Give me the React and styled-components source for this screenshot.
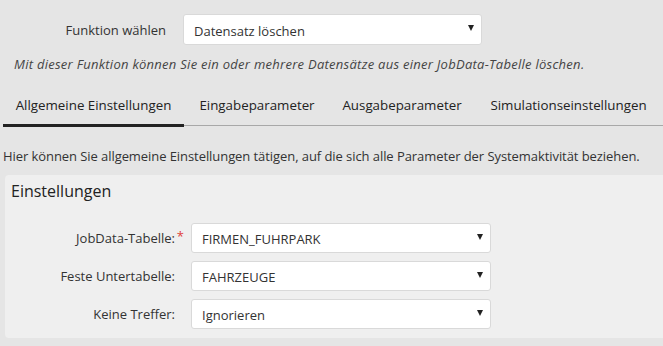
import React from 'react'
import styled, { createGlobalStyle } from 'styled-components'

const GlobalStyle = createGlobalStyle`
  html, body {
    margin: 0;
    padding: 0;
    background: #e5e5e5;
    font-family: "Open Sans", "Liberation Sans", sans-serif;
    font-size: 13px;
    color: #333;
  }
`

const Page = styled.div`
  width: 663px;
  height: 346px;
  overflow: hidden;
`

const TopRow = styled.div`
  display: flex;
  align-items: center;
  padding-top: 14px;
`

const TopLabel = styled.label`
  width: 166px;
  text-align: right;
  margin-right: 17px;
  color: #333;
`

const Select = styled.div`
  box-sizing: border-box;
  display: flex;
  align-items: center;
  justify-content: space-between;
  width: ${p => p.$width}px;
  height: ${p => p.$height}px;
  padding: 2px 7px 0 10px;
  background: #fff;
  border: 1px solid #d9d9d9;
  border-radius: 3px;
  color: #333;
`

const Caret = styled.span`
  width: 0;
  height: 0;
  border-left: 3px solid transparent;
  border-right: 3px solid transparent;
  border-top: 6px solid #222;
  margin-top: -5px;
`

const Intro = styled.p`
  margin: 10px 0 0 14px;
  font-style: italic;
  letter-spacing: 0.27px;
  color: #444;
`

const Tabs = styled.div`
  display: flex;
  margin: 23px 0 0 3px;
  border-bottom: 1px solid #a8a8a8;
`

const Tab = styled.div`
  padding: 0 0 10px;
  width: ${p => p.$width}px;
  box-sizing: border-box;
  text-align: center;
  font-size: 13.33px;
  color: #222;
  border-bottom: 3px solid ${p => (p.$active ? '#222' : 'transparent')};
  margin-bottom: -2px;
`

const Hint = styled.p`
  margin: 21px 0 0 3px;
  letter-spacing: -0.07px;
  color: #333;
`

const Panel = styled.section`
  margin: 10px 0 0 5px;
  padding: 5px 0 9px 6px;
  background: #efefef;
  border-radius: 4px 0 0 4px;
`

const PanelTitle = styled.h3`
  margin: 0 0 21px;
  font-size: 16px;
  font-weight: 400;
  color: #222;
`

const Form = styled.div`
  display: flex;
  flex-direction: column;
  gap: 8px;
`

const Row = styled.div`
  display: flex;
  align-items: center;
`

const RowLabel = styled.label`
  width: 164px;
  text-align: right;
  padding-right: 16px;
  box-sizing: content-box;
  color: #333;
  position: relative;
`

const Star = styled.span`
  position: absolute;
  right: 7px;
  top: -2px;
  color: #e0403a;
`

function App() {
  return (
    <Page>
      <GlobalStyle />
      <TopRow>
        <TopLabel>Funktion wählen</TopLabel>
        <Select $width={299} $height={31}>
          Datensatz löschen
          <Caret />
        </Select>
      </TopRow>
      <Intro>Mit dieser Funktion können Sie ein oder mehrere Datensätze aus einer JobData-Tabelle löschen.</Intro>
      <Tabs>
        <Tab $active $width={181}>Allgemeine Einstellungen</Tab>
        <Tab $width={146}>Eingabeparameter</Tab>
        <Tab $width={144}>Ausgabeparameter</Tab>
        <Tab $width={189}>Simulationseinstellungen</Tab>
      </Tabs>
      <Hint>Hier können Sie allgemeine Einstellungen tätigen, auf die sich alle Parameter der Systemaktivität beziehen.</Hint>
      <Panel>
        <PanelTitle>Einstellungen</PanelTitle>
        <Form>
          <Row>
            <RowLabel>JobData-Tabelle:<Star>*</Star></RowLabel>
            <Select $width={300} $height={30}>FIRMEN_FUHRPARK<Caret /></Select>
          </Row>
          <Row>
            <RowLabel>Feste Untertabelle:</RowLabel>
            <Select $width={300} $height={30}>FAHRZEUGE<Caret /></Select>
          </Row>
          <Row>
            <RowLabel>Keine Treffer:</RowLabel>
            <Select $width={300} $height={30}>Ignorieren<Caret /></Select>
          </Row>
        </Form>
      </Panel>
    </Page>
  )
}

export default App
